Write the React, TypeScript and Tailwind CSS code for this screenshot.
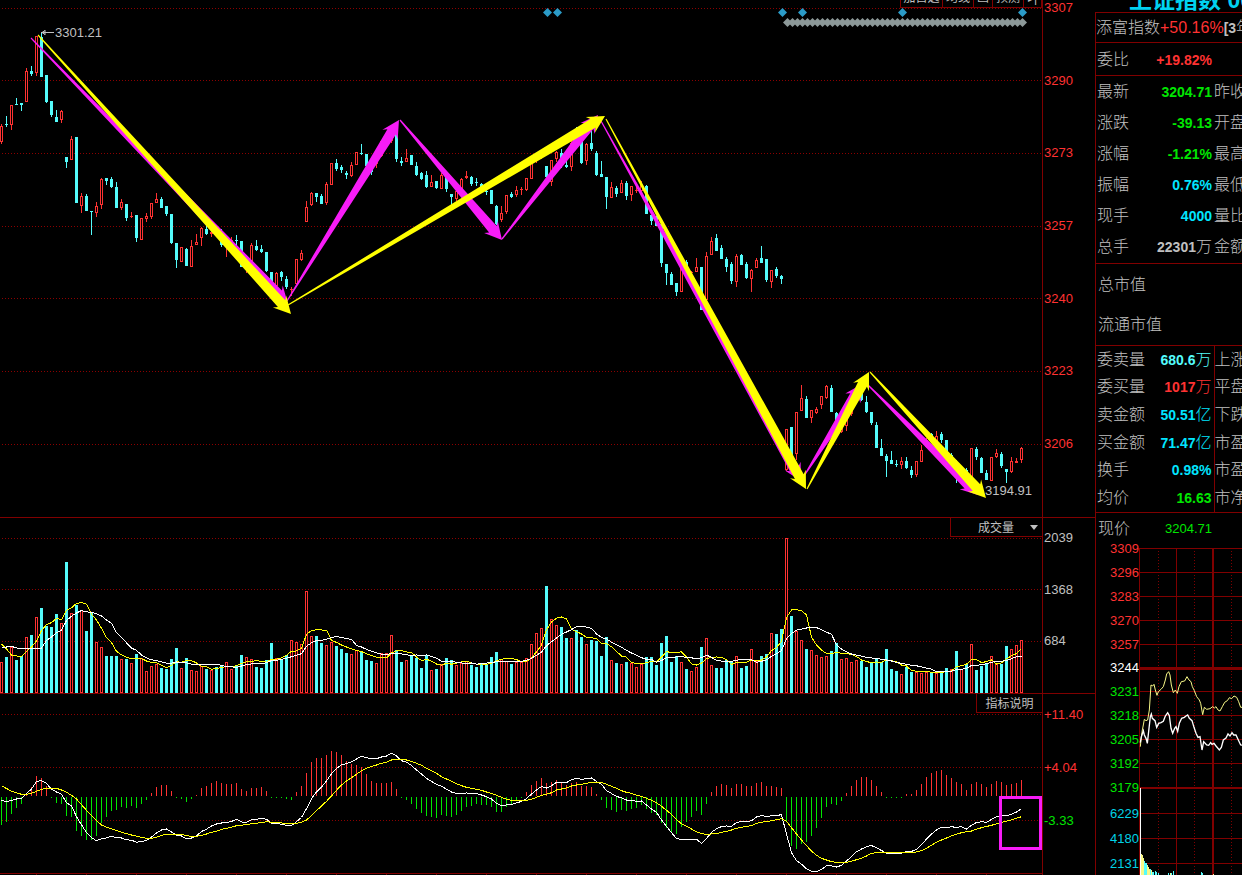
import { clsx } from 'clsx'

const RED = '#ff3232'
const CYAN = '#54fcfc'
const GREEN = '#00e600'
const DARK = '#800000'
const PINK = '#f71cf7'

// one entry per bar: direction, high, body top, body bottom, low
const candles = `
r124,126,142,144 c116,124,125,127 r105,105,125,130 c98,104,105,105 c103,103,105,111 r68,71,102,102 c66,71,74,76 r36,36,73,76 c32,37,77,77 c75,75,102,103
c101,101,115,117 c110,117,122,122 r110,111,120,123 c157,157,162,168 r136,139,160,160 c137,137,203,203 r193,196,206,213 c194,196,211,211 c211,211,212,235 r202,206,213,217
r178,179,205,209 c178,178,181,185 c177,179,187,188 c182,187,208,208 r199,202,208,210 c204,204,218,221 r212,216,217,218 c215,215,238,242 r218,218,240,240 r213,216,219,222
r203,203,217,219 r193,199,203,203 c197,199,208,208 c206,206,214,216 c214,214,243,244 c243,243,260,268 r247,247,262,262 c248,249,266,266 r240,246,267,267 r234,242,245,245
r227,228,238,246 c225,229,234,235 r230,232,234,237 c225,226,232,234 c229,231,245,247 r238,240,247,257 r237,240,244,244 c235,240,241,245 c241,241,267,267 r255,257,268,273
r243,245,261,265 c240,246,250,251 c245,249,252,253 c252,252,271,272 c272,272,286,286 r272,273,286,286 c271,272,277,281 c276,279,287,289 r287,289,290,296 r259,259,284,284
r250,253,260,261 r201,207,222,222 r192,193,205,206 c193,193,197,202 c194,196,204,204 r182,184,203,205 r163,163,185,185 c159,163,169,171 c165,167,170,173 c171,173,175,179
r162,165,176,177 r152,152,165,165 c144,153,154,155 c154,154,166,168 c165,166,172,175 r156,158,164,168 r140,141,156,157 r135,137,142,144 r134,136,141,143 c131,131,159,162
c157,161,163,166 r149,158,162,162 c155,155,165,165 c162,166,175,176 c172,173,179,180 c171,175,187,188 r175,182,187,187 c181,181,188,189 r173,175,189,189 c175,175,189,192
c194,194,197,205 r189,191,199,201 r178,179,190,192 r171,176,178,179 c176,177,184,186 c178,182,183,186 c183,184,188,190 c190,191,192,195 c190,190,204,204 c205,206,224,225
r206,213,220,222 r195,195,212,214 c192,194,197,198 r186,190,195,197 r187,189,190,195 r178,178,190,191 r163,163,179,179 r155,157,161,163 r152,154,157,159 c166,166,177,180
r160,160,182,186 r151,152,159,162 c149,153,164,168 c160,165,167,168 r140,143,167,171 c127,132,145,147 c134,136,163,164 r143,144,161,165 c131,143,149,151 c151,153,175,176
c161,174,177,177 c177,177,197,209 r182,187,198,198 c186,188,194,197 r180,183,193,193 c181,183,196,200 r186,186,195,201 r185,190,191,193 r181,185,191,192 c185,186,214,214
c215,215,221,225 c216,216,226,226 c224,224,263,267 c264,264,273,285 c272,274,285,285 c283,283,292,296 r266,268,292,292 c260,262,272,274 r271,272,273,275 r258,267,272,272
c267,267,310,310 r252,256,300,302 r237,241,255,255 c234,238,251,251 c245,248,259,259 c257,259,267,272 c262,264,281,284 r254,256,282,287 c254,255,265,265 c262,264,278,279
r269,270,279,292 r258,260,268,268 c246,258,263,263 c259,259,280,282 r270,270,282,288 c267,269,276,278 c275,276,279,284 r429,429,470,471 c427,427,457,460 r412,412,454,460
r385,398,411,411 c396,399,418,418 r410,410,418,423 r407,409,413,414 r396,396,405,409 r385,386,398,399 c385,388,412,412 c412,413,428,430 r420,422,432,433 r414,418,426,431
r400,404,414,416 c388,389,391,392 c391,392,400,401 c396,402,412,413 c412,412,423,425 c422,425,448,448 c439,448,456,456 c454,456,461,477 c451,460,464,464 c460,464,465,467
r457,461,465,469 c457,461,468,469 c466,470,475,478 r461,461,475,477 r445,450,462,462 r438,440,447,448 c433,434,438,440 r431,436,443,443 c432,434,440,443 c440,440,452,453
c453,455,465,467 c460,462,475,483 r468,470,474,476 c468,470,476,478 r448,448,477,480 c447,449,457,460 c457,458,473,473 c470,473,480,480 r457,457,481,481 r449,453,457,458
c452,454,466,468 c469,469,472,483 r457,461,472,473 r458,461,463,463 r447,448,460,463`
  .trim()
  .split(/\s+/)
  .map((s) => ({ up: s[0] === 'r', v: s.slice(1).split(',').map(Number) }))

// bar tops, three units per pixel, floor at 489
const volume = `
r396 c381 r351 c390 c378 r321 c315 r261 c234 c288 c291 c252 r279 c96 r249 c225 r240 c303 c246 r336
r351 c378 c378 c378 r387 c387 r399 c372 r384 r423 r408 r402 c414 c417 c387 c354 r414 c384 r420 r423
r408 c417 r420 c411 c405 r396 r417 c408 c375 r381 r387 c411 c414 c390 c339 r384 c390 c375 r330 r336
r342 r183 r318 c318 c339 r345 r336 c348 c357 c369 r372 r360 c366 c390 c393 r399 r369 r369 r315 c360
c396 r390 c375 c384 c414 c375 r420 c417 r402 c384 c390 r405 r399 r393 c405 c411 c402 c402 c381 c366
r387 r393 c402 r396 r396 r384 r342 r309 r294 c168 r267 r285 c291 c324 r324 c300 c321 r342 c330 c333
c378 c321 r390 c399 r402 c396 r399 r411 r402 c381 c381 c405 c339 c318 c396 c378 r396 c417 r423 r411
c351 r324 r405 c414 c414 c390 c393 r378 c414 c408 r357 r393 c378 c372 r309 c312 c297 r24 c258 r303
r330 c357 r360 r375 r381 r378 c363 c339 r387 r384 r396 r390 c393 c411 c399 c387 c396 c357 c417 c423
r432 c411 c426 r426 r429 r426 c429 r429 c426 c414 r417 c363 r417 c402 r342 c420 c408 c402 r378 r402
c402 c348 r357 r345 r330`
  .trim()
  .split(/\s+/)
  .map((s) => ({ up: s[0] === 'r', top: Number(s.slice(1)) }))

// histogram ends, three units per pixel, zero line at 799
const macd = `
885 876 852 834 822 792 771 738 744 768 803 819 822 858 861 903 918 930 930 918
879 861 843 840 831 834 828 834 822 810 789 771 765 765 783 804 807 816 807 795
774 768 759 753 759 762 762 759 777 783 774 774 771 783 804 803 804 807 810 786
768 729 696 684 684 675 663 666 675 693 702 705 711 732 753 759 759 759 756 777
803 810 822 837 849 858 861 864 855 858 861 855 843 831 828 822 825 825 831 846
846 831 822 810 803 786 765 753 744 759 756 750 759 765 759 756 768 768 771 792
810 834 840 846 840 843 837 834 825 837 849 855 879 894 906 912 891 876 861 843
855 822 786 768 762 765 774 762 762 768 768 759 756 768 768 771 774 873 948 957
942 936 918 894 864 831 822 825 813 789 768 750 741 741 750 768 786 803 804 804
803 792 792 780 762 741 729 723 720 735 744 756 762 780 762 756 762 771 762 753
756 765 762 759 750`
  .trim()
  .split(/\s+/)
  .map(Number)

const deaKnots = `
0:767 2:784 4:793 5:793 6:790 8:778 9:775 11:775 12:780 13:787 14:796 15:807 16:824 17:841 18:856 19:872 20:885 21:892 22:896
24:907 26:915 28:922 29:925 30:925 31:922 32:916 33:913 36:913 37:917 38:919 39:919 40:916 41:912 42:907 43:904 44:898 45:895
46:892 47:887 48:886 50:881 51:880 53:875 54:877 56:879 57:881 59:880 60:877 61:870 62:857 63:842 64:828 65:814 66:798 67:781
68:765 69:753 70:743 71:733 72:722 73:715 74:709 75:705 76:700 77:697 78:690 79:688 81:690 82:694 83:700 84:706 85:715 86:722
87:730 88:740 89:747 90:754 91:761 92:767 93:772 95:778 96:781 97:786 98:790 99:796 100:802 101:808 102:811 103:812 105:811
106:808 107:802 108:796 109:793 110:788 111:780 112:777 113:774 114:768 115:765 116:763 117:760 118:757 120:757 121:763
122:769 123:775 124:782 125:787 126:790 127:796 128:799 129:805 130:811 131:818 132:829 133:841 134:853 135:869 136:881
137:889 138:897 139:905 140:911 141:913 142:912 143:911 144:907 145:904 146:900 147:895 149:889 150:887 151:880 152:877
154:872 156:866 157:874 158:893 159:912 160:930 161:947 162:963 163:976 164:985 165:990 166:995 167:997 168:998 169:997
170:994 171:989 172:985 173:978 174:970 175:968 176:967 182:967 183:966 184:962 185:955 186:946 187:937 188:930 189:924
190:917 192:908 194:903 196:893 198:886 200:877 202:870 204:860`
  .trim()
  .split(/\s+/)
  .map((s) => s.split(':').map(Number))

const dea = macd.map((_, i) => {
  const k = Math.max(1, deaKnots.findIndex(([x]) => x >= i))
  const [x0, y0] = deaKnots[k - 1]
  const [x1, y1] = deaKnots[k]
  return y0 + ((y1 - y0) * (i - x0)) / (x1 - x0)
})
const dif = dea.map((d, i) => d + (macd[i] - 797) / 2)

const average = (n: number, head: number[]) =>
  volume.map((_, i) =>
    i < n - 1 ? head[i] : volume.slice(i - n + 1, i + 1).reduce((sum, b) => sum + b.top, 0) / n
  )
const ma5 = average(5, [342, 357, 375, 378])
const ma10 = average(10, [351, 351, 349, 354, 357, 354, 354, 354, 354])

const toPoints = (ys: number[], shift: number) =>
  ys.map((y, i) => `${i * 5 + 1.5},${(y / 3 + shift).toFixed(1)}`).join(' ')

const arrows = [
  { color: PINK, line: [31, 38, 288, 304] },
  { color: PINK, line: [287, 301, 399, 120] },
  { color: PINK, line: [400, 120, 502, 240] },
  { color: PINK, line: [502, 239, 598, 115] },
  { color: PINK, line: [601, 121, 801, 481] },
  { color: PINK, line: [804, 476, 862, 384] },
  { color: PINK, line: [868, 385, 978, 495] },
  { color: '#ffff00', line: [38, 35, 291, 314] },
  { color: '#ffff00', line: [288, 305, 605, 116] },
  { color: '#ffff00', line: [606, 119, 806, 489] },
  { color: '#ffff00', line: [807, 489, 869, 372] },
  { color: '#ffff00', line: [870, 372, 986, 498] },
]

const Arrow = ({ color, line }: { color: string; line: number[] }) => {
  const [x1, y1, x2, y2] = line
  const len = Math.hypot(x2 - x1, y2 - y1)
  const ux = (x2 - x1) / len
  const uy = (y2 - y1) / len
  // along the shaft, then sideways
  const at = (a: number, s: number) => `${(x1 + ux * a - uy * s).toFixed(1)},${(y1 + uy * a + ux * s).toFixed(1)}`
  const pts = [at(0, 0.6), at(len - 14, 5), at(len - 17, 9), at(len, 0), at(len - 17, -9), at(len - 14, -5), at(0, -0.6)]
  return <polygon points={pts.join(' ')} fill={color} />
}

const GridLines = ({ ys }: { ys: number[] }) => (
  <>
    {ys.map((y) => (
      <line key={y} x1="2" x2="100%" y1={y + 0.5} y2={y + 0.5} stroke="#8c0000" strokeDasharray="1 2" />
    ))}
  </>
)

const Bar = ({ x, top, bottom, up }: { x: number; top: number; bottom: number; up: boolean }) =>
  up && bottom - top > 1 ? (
    <rect x={x + 0.5} y={top + 0.5} width="2" height={bottom - top - 1} fill="#000" stroke={RED} />
  ) : (
    <rect x={x} y={top} width="3" height={bottom - top} fill={up ? RED : CYAN} />
  )

const Curve = ({ points, color }: { points: string; color: string }) => (
  <polyline points={points} fill="none" stroke={color} shapeRendering="crispEdges" />
)

const Diamond = ({ x, y, r, color }: { x: number; y: number; r: number; color: string }) => (
  <polygon points={`${x - r},${y} ${x},${y - r} ${x + r},${y} ${x},${y + r}`} fill={color} />
)

const Scale = ({ labels, className }: { labels: { text: string; color: string }[]; className: string }) => (
  <div className={clsx('flex flex-col justify-between text-[13px] leading-4', className)}>
    {labels.map((l) => (
      <span key={l.text} className={l.color}>{l.text}</span>
    ))}
  </div>
)

const red = (text: string) => ({ text, color: 'text-[#ff3232]' })
const grey = (text: string) => ({ text, color: 'text-[#c0c0c0]' })
const green = (text: string) => ({ text, color: 'text-[#00e600]' })
const blue = (text: string) => ({ text, color: 'text-[#00d2e6]' })

const PriceChart = () => (
  <section className="relative flex border-b border-[#800000]">
    <svg className="h-[517px] min-w-0 flex-1" aria-label="K线">
      <GridLines ys={[8, 80, 153, 226, 298, 371, 444]} />
      <g shapeRendering="crispEdges">
        {candles.map(({ up, v: [h, t, b, l] }, i) => (
          <g key={i}>
            <rect x={i * 5 + 1} y={h} width="1" height={l - h} fill={up ? RED : CYAN} />
            <Bar x={i * 5} top={t} bottom={b} up={up} />
          </g>
        ))}
      </g>
      {[547, 557, 782, 802, 902, 1022].map((x) => <Diamond key={x} x={x + 0.5} y={12.5} r={4.5} color="#2b9bc8" />)}
      {Array.from({ length: 48 }, (_, i) => <Diamond key={i} x={i * 5 + 787.5} y={22.5} r={4.5} color="#8c9898" />)}
      <path d="M41 32.5h13M45 30v5M42 32.5l3-2M42 32.5l3 2" stroke="#c0c0c0" fill="none" />
      <g fill="#c0c0c0" fontSize="13">
        <text x="55" y="37">3301.21</text>
        <text x="985" y="495">3194.91</text>
      </g>
      {arrows.map((a) => <Arrow key={a.line.join()} {...a} />)}
    </svg>
    <div className="absolute right-[53px] top-0 flex h-2 overflow-hidden border-b border-l border-[#800000] bg-black text-xs text-[#c0c0c0]">
      <ToolButton className="w-[42px]">加自选</ToolButton>
      <ToolButton className="w-[31px]">均线</ToolButton>
      <ToolButton className="w-[19px]">画</ToolButton>
      <ToolButton className="w-[31px]">预测</ToolButton>
      <ToolButton className="w-[18px]">▸|</ToolButton>
    </div>
    <Scale
      className="h-[452px] w-[53px] pl-[2px]"
      labels={['3307', '3290', '3273', '3257', '3240', '3223', '3206'].map(red)}
    />
  </section>
)

const ToolButton = ({ className, children }: { className: string; children: string }) => (
  <button className={clsx('flex h-2 items-end justify-center whitespace-nowrap border-r border-[#800000] leading-3', className)}>
    <span className="mb-1">{children}</span>
  </button>
)

const VolumeChart = () => (
  <section className="relative flex border-b border-[#800000]">
    <svg className="h-[175px] min-w-0 flex-1" aria-label="成交量">
      <GridLines ys={[20, 71, 123]} />
      <g shapeRendering="crispEdges">
        {volume.map((b, i) => (
          <Bar key={i} x={i * 5} top={Math.round(b.top / 3) + 12} bottom={175} up={b.up} />
        ))}
      </g>
      <Curve points={toPoints(ma5, 12)} color="#ffff00" />
      <Curve points={toPoints(ma10, 12)} color="#fff" />
    </svg>
    <div className="absolute right-[53px] top-0 h-[19px] w-[92px] border-b border-l border-[#800000] bg-black">
      <select aria-label="指标" className="block h-full w-full appearance-none bg-black pl-[27px] pt-[2px] text-xs leading-4 text-[#c0c0c0]">
        <option>成交量</option>
      </select>
      <svg className="pointer-events-none absolute right-1 top-[7px]" width="8" height="5">
        <path d="M0 0h8L4 5z" fill="#c0c0c0" />
      </svg>
    </div>
    <Scale className="mt-3 h-[119px] w-[53px] pl-[2px]" labels={['2039', '1368', '684'].map(grey)} />
  </section>
)

const MacdChart = () => (
  <section className="relative flex">
    <svg className="h-[181px] min-w-0 flex-1" aria-label="MACD">
      <GridLines ys={[20, 73, 126]} />
      <g shapeRendering="crispEdges">
        {macd.map((end, i) => {
          const y = Math.round(end / 3) - 164
          return end < 799
            ? <rect key={i} x={i * 5 + 1} y={y} width="1" height={102 - y} fill={RED} />
            : <rect key={i} x={i * 5 + 1} y="103" width="1" height={y - 103} fill={GREEN} />
        })}
        <rect y="179" width="100%" height="1" fill={DARK} />
        {Array.from({ length: 20 }, (_, i) => (
          <rect key={i} x={i * 50 + 36} y="180" width="1" height="1" fill={DARK} />
        ))}
      </g>
      <Curve points={toPoints(dif, -164)} color="#fff" />
      <Curve points={toPoints(dea, -164)} color="#ffff00" />
      <rect x="1000.5" y="103.5" width="40" height="51" fill="none" stroke={PINK} strokeWidth="3" />
    </svg>
    <button className="absolute right-[53px] top-0 h-[19px] w-[66px] border-b border-l border-[#800000] bg-black pt-[2px] text-xs leading-4 text-[#c0c0c0]">
      指标说明
    </button>
    <Scale className="mt-[13px] h-[122px] w-[53px] pl-[2px]" labels={[red('+11.40'), red('+4.04'), green('-3.33')]} />
  </section>
)

const quotes = [
  { label: '最新', value: '3204.71', color: 'text-[#00e600]', next: '昨收' },
  { label: '涨跌', value: '-39.13', color: 'text-[#00e600]', next: '开盘' },
  { label: '涨幅', value: '-1.21%', color: 'text-[#00e600]', next: '最高' },
  { label: '振幅', value: '0.76%', color: 'text-[#00e5ff]', next: '最低' },
  { label: '现手', value: '4000', color: 'text-[#00e5ff]', next: '量比' },
  { label: '总手', value: '22301', unit: '万', color: 'text-[#c0c0c0]', next: '金额' },
]

const orders = [
  { label: '委卖量', value: '680.6', unit: '万', color: 'text-[#54fcfc]', next: '上涨' },
  { label: '委买量', value: '1017', unit: '万', color: 'text-[#ff3232]', next: '平盘' },
  { label: '卖金额', value: '50.51', unit: '亿', color: 'text-[#00e5ff]', next: '下跌' },
  { label: '买金额', value: '71.47', unit: '亿', color: 'text-[#00e5ff]', next: '市盈' },
  { label: '换手', value: '0.98%', color: 'text-[#00e5ff]', next: '市盈' },
  { label: '均价', value: '16.63', color: 'text-[#00e600]', next: '市净' },
]

interface QuoteRow {
  label: string
  value: string
  unit?: string
  color: string
  next: string
}

const QuoteTable = ({ rows, className, split }: { rows: QuoteRow[]; className: string; split?: boolean }) => (
  <table className={clsx('w-full table-fixed border-b border-[#800000]', className)}>
    <tbody>
      {rows.map((r) => (
        <tr key={r.label}>
          <th className="w-[52px] whitespace-nowrap p-0 pl-px text-left font-light">{r.label}</th>
          <td className={clsx('w-[66px] whitespace-nowrap p-0 pr-[2px] text-right text-sm font-bold', r.color, split && 'border-r border-[#800000]')}>
            {r.value}
            {r.unit && <span className="text-base font-light leading-4">{r.unit}</span>}
          </td>
          <td className="whitespace-nowrap p-0 font-light">{r.next}</td>
        </tr>
      ))}
    </tbody>
  </table>
)

const yellowLine = '151,710 153,690 157,660 160,645 163,628 168,632 173,630 178,600 183,525 188,528 192,523 196,540 201,556 205,545 213,538 220,530 226,510 230,492 236,485 240,495 244,525 250,548 256,540 262,550 267,530 274,515 284,513 291,500 297,510 303,515 307,530 313,542 320,560 328,570 332,580 338,614 343,592 350,598 360,596 368,590 373,594 378,590 384,600 390,603 397,590 404,577 412,572 418,563 425,566 432,558 440,562 446,575 452,592 459,592'
const whiteLine = '151,698 154,680 160,662 163,675 168,685 172,700 177,655 181,620 184,612 187,625 195,632 200,652 206,640 213,638 220,634 226,618 233,608 238,617 243,655 248,670 254,655 258,650 263,664 268,640 275,625 283,622 288,618 293,615 298,625 306,632 312,652 318,670 324,682 330,680 336,720 341,695 350,705 356,706 362,698 366,703 372,700 378,708 388,720 394,712 400,690 408,684 414,672 420,678 426,668 431,675 438,675 445,690 452,705 459,706'

const minuteBars = [
  [150, 834, '#fff'], [153, 1032, '#f8f888'], [156, 1035, '#f8f888'], [159, 1044, '#f8f888'], [162, 1053, CYAN],
  [165, 1059, CYAN], [168, 1059, CYAN], [171, 1065, '#f8f888'], [174, 1071, '#f8f888'], [177, 1077, '#f8f888'],
  [180, 1077, CYAN], [183, 1080, '#f8f888'], [186, 1086, CYAN], [189, 1086, CYAN], [195, 1083, CYAN], [198, 1086, CYAN],
  [204, 1089, CYAN], [234, 1089, CYAN], [240, 1089, '#f8f888'], [243, 1089, CYAN], [249, 1083, CYAN],
  [333, 1086, CYAN], [336, 1089, CYAN], [369, 1092, '#f8f888'],
] as const

const MinuteChart = () => (
  <div className="flex">
    <div className="w-[43px] text-right">
      <Scale
        className="h-[255px]"
        labels={[
          ...['3309', '3296', '3283', '3270', '3257'].map(red),
          { text: '3244', color: 'text-white' },
          ...['3231', '3218', '3205', '3192', '3179'].map(green),
        ]}
      />
      <Scale className="mt-[10px] h-[66px]" labels={['6229', '4180', '2131'].map(blue)} />
    </div>
    <svg className="h-[334px] min-w-0 flex-1" aria-label="分时">
      <g shapeRendering="crispEdges" fill={DARK}>
        {[7, 31, 55, 79, 103, 150, 174, 198, 222, 272, 297, 322].map((y) => (
          <rect key={y} y={y} width="100%" height="1" />
        ))}
        <rect y="126" width="100%" height="3" />
        <rect y="246" width="100%" height="2" />
        <rect x="0" y="7" width="1" height="100%" />
        <rect x="37" y="7" width="1" height="100%" />
        <rect x="73" y="7" width="2" height="100%" />
        {[19, 55, 92].map((x) => (
          <line key={x} x1={x + 0.5} x2={x + 0.5} y1="10" y2="100%" stroke={DARK} strokeDasharray="1 2" />
        ))}
      </g>
      <g transform="scale(.33333) translate(-147 -93)">
        {minuteBars.map(([x, y, fill]) => <rect key={x} x={x} y={y} width="3" height={1095 - y} fill={fill} />)}
        <polyline points={yellowLine} fill="none" stroke="#f8f888" strokeWidth="3" />
        <polyline points={whiteLine} fill="none" stroke="#fff" strokeWidth="4" />
      </g>
    </svg>
  </div>
)

const QuotePanel = () => (
  <aside className="flex w-[147px] shrink-0 flex-col overflow-hidden text-[#c0c0c0]">
    <h1 className="flex h-3 items-end whitespace-nowrap pl-[34px] text-[23px] font-bold leading-6 text-[#00d2f0]">
      上证指数 00
    </h1>
    <div className="flex-1 overflow-hidden border-l border-t border-[#800000]">
      <p className="flex h-[30px] items-center whitespace-nowrap border-b border-[#800000] font-light">
        添富指数<span className="text-[#ff3232]">+50.16%</span><b className="text-sm font-bold">[3</b>年
      </p>
      <p className="flex h-[33px] items-center border-b border-[#800000] pl-px pt-px font-light">
        委比<span className="w-[83px] text-right text-sm font-bold text-[#ff3232]">+19.82%</span>
      </p>
      <QuoteTable rows={quotes} className="h-[188px]" />
      <div className="border-b border-[#800000] pl-[2px] pt-px font-light leading-10">
        <p>总市值</p>
        <p>流通市值</p>
      </div>
      <QuoteTable rows={orders} className="h-[167px]" split />
      <p className="flex h-7 items-center pl-[2px] pt-1 font-light">
        现价<span className="w-[82px] text-right text-[13px] font-normal text-[#00e600]">3204.71</span>
      </p>
      <MinuteChart />
    </div>
  </aside>
)

export default function App() {
  return (
    <div className="flex h-screen overflow-hidden bg-black font-['Liberation_Sans','Noto_Sans_CJK_SC',sans-serif]">
      <main className="relative min-w-0 flex-1">
        <PriceChart />
        <VolumeChart />
        <MacdChart />
        {/* border between the charts and their scales */}
        <div className="absolute right-[52px] top-0 h-full w-px bg-[#800000]" />
      </main>
      <QuotePanel />
    </div>
  )
}
